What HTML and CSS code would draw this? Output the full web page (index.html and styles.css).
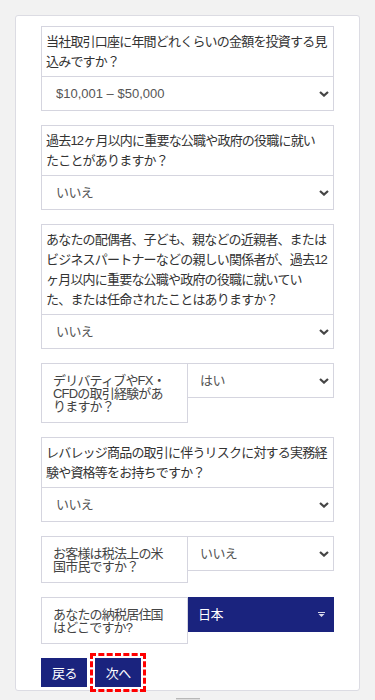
FILE: index.html
```html
<!DOCTYPE html>
<html lang="ja">
<head>
<meta charset="utf-8">
<title>フォーム</title>
<link rel="stylesheet" href="styles.css">
</head>
<body>
<div class="card">
  <form class="form">
    <div class="field">
      <label class="q">当社取引口座に年間どれくらいの金額を投資する見込みですか？</label>
      <div class="sel">
        <select class="num"><option>$10,001 – $50,000</option></select>
        <svg class="chev" viewBox="0 0 10 6"><path d="M1 1 L5 4.6 L9 1" fill="none" stroke="#454545" stroke-width="2.2"/></svg>
      </div>
    </div>
    <div class="field">
      <label class="q">過去12ヶ月以内に重要な公職や政府の役職に就い<br>たことがありますか？</label>
      <div class="sel">
        <select><option>いいえ</option></select>
        <svg class="chev" viewBox="0 0 10 6"><path d="M1 1 L5 4.6 L9 1" fill="none" stroke="#454545" stroke-width="2.2"/></svg>
      </div>
    </div>
    <div class="field">
      <label class="q">あなたの配偶者、子ども、親などの近親者、またはビジネスパートナーなどの親しい関係者が、過去12ヶ月以内に重要な公職や政府の役職に就いてい<br>た、または任命されたことはありますか？</label>
      <div class="sel">
        <select><option>いいえ</option></select>
        <svg class="chev" viewBox="0 0 10 6"><path d="M1 1 L5 4.6 L9 1" fill="none" stroke="#454545" stroke-width="2.2"/></svg>
      </div>
    </div>
    <div class="field row">
      <label class="q">デリバティブやFX・CFDの取引経験がありますか？</label>
      <div class="sel">
        <select><option>はい</option></select>
        <svg class="chev" viewBox="0 0 10 6"><path d="M1 1 L5 4.6 L9 1" fill="none" stroke="#454545" stroke-width="2.2"/></svg>
      </div>
    </div>
    <div class="field">
      <label class="q">レバレッジ商品の取引に伴うリスクに対する実務経験や資格等をお持ちですか？</label>
      <div class="sel">
        <select><option>いいえ</option></select>
        <svg class="chev" viewBox="0 0 10 6"><path d="M1 1 L5 4.6 L9 1" fill="none" stroke="#454545" stroke-width="2.2"/></svg>
      </div>
    </div>
    <div class="field row">
      <label class="q">お客様は税法上の米国市民ですか？</label>
      <div class="sel">
        <select><option>いいえ</option></select>
        <svg class="chev" viewBox="0 0 10 6"><path d="M1 1 L5 4.6 L9 1" fill="none" stroke="#454545" stroke-width="2.2"/></svg>
      </div>
    </div>
    <div class="field row">
      <label class="q">あなたの納税居住国はどこですか?</label>
      <div class="sel dark">
        <select><option>日本</option></select>
        <svg class="caret" viewBox="0 0 7 5"><rect x="0" y="0" width="7" height="1" fill="#d8d9ea"/><path d="M0.5 2 L6.5 2 L3.5 5 Z" fill="#d8d9ea"/></svg>
      </div>
    </div>
    <div class="actions">
      <button type="button" class="btn">戻る</button>
      <button type="button" class="btn focus">次へ</button>
    </div>
  </form>
</div>
<div class="totop"></div>
</body>
</html>
```
FILE: styles.css
```css
* { box-sizing: border-box; }
html, body { margin: 0; background: #f2f2f2; }
body {
  padding: 15px 15px 0;
  font-family: "Liberation Sans", "Noto Sans CJK JP", sans-serif;
  font-size: 13px;
  color: #333;
}
.card {
  background: #fff;
  border: 1px solid #dcdce3;
  border-radius: 3px;
  padding: 10px 25px 3px;
}
.form {
  display: flex;
  flex-direction: column;
  gap: 14px;
}
.field {
  border: 1px solid #d5d5df;
  display: flex;
  flex-direction: column;
}
.q {
  display: block;
  padding: 5px 2px 4px 4px;
  line-height: 20px;
  font-size: 13px;
  letter-spacing: -0.8px;
  color: #333;
}
.sel {
  position: relative;
  border-top: 1px solid #d5d5df;
  height: 34px;
}
.sel select {
  appearance: none;
  -webkit-appearance: none;
  display: block;
  width: 100%;
  height: 100%;
  border: 0;
  border-radius: 0;
  background: transparent;
  padding: 0 20px 0 14px;
  font-family: inherit;
  font-size: 13px;
  letter-spacing: -0.6px;
  color: #555;
  outline: none;
}
.sel select.num { letter-spacing: 0; }
.chev {
  position: absolute;
  right: 4px;
  top: 50%;
  width: 10px;
  height: 6px;
  margin-top: -3px;
  pointer-events: none;
}
.field.row {
  border: 0;
  display: grid;
  grid-template-columns: 147px 1fr;
  align-items: start;
}
.row .q {
  border: 1px solid #d5d5df;
  padding: 10px 17px 9px 11px;
  line-height: 13px;
  color: #444;
}
.row .sel {
  border: 1px solid #d5d5df;
  border-left: 0;
  height: 35px;
}
.row .sel select { padding-left: 12px; }
.sel.dark {
  background: #1a237e;
  border-color: #1a237e;
}
.sel.dark select {
  color: #fff;
  padding-left: 10px;
}
.caret {
  position: absolute;
  right: 8px;
  top: 50%;
  width: 7px;
  height: 5px;
  margin-top: -3px;
  pointer-events: none;
}
.actions {
  display: flex;
  gap: 8px;
}
.btn {
  height: 29px;
  padding: 0 10px 0 11px;
  border: 0;
  border-radius: 0;
  background: #1a237e;
  color: #fff;
  font-family: inherit;
  font-size: 13px;
  letter-spacing: -0.6px;
}
.btn.focus {
  outline: 3px dashed #f00;
  outline-offset: 2px;
}
.totop {
  width: 24px;
  height: 10px;
  margin: 7px auto 0;
  background: #dcdcdc;
  border-top: 1px solid #b8b8b8;
}
```
